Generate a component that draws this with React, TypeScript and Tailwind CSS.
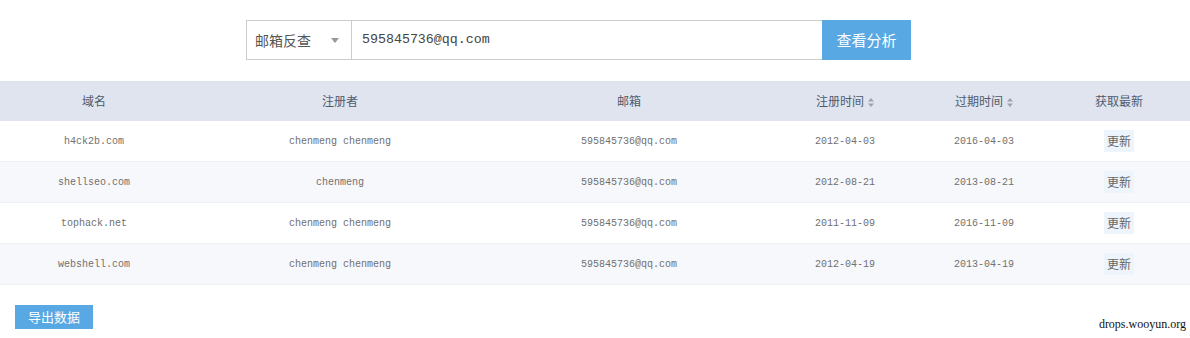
import React from 'react';

interface Row {
  domain: string;
  registrant: string;
  email: string;
  created: string;
  expires: string;
}

const rows: Row[] = [
  { domain: 'h4ck2b.com', registrant: 'chenmeng chenmeng', email: '595845736@qq.com', created: '2012-04-03', expires: '2016-04-03' },
  { domain: 'shellseo.com', registrant: 'chenmeng', email: '595845736@qq.com', created: '2012-08-21', expires: '2013-08-21' },
  { domain: 'tophack.net', registrant: 'chenmeng chenmeng', email: '595845736@qq.com', created: '2011-11-09', expires: '2016-11-09' },
  { domain: 'webshell.com', registrant: 'chenmeng chenmeng', email: '595845736@qq.com', created: '2012-04-19', expires: '2013-04-19' },
];

const cjk = "font-['Microsoft_YaHei','Noto_Sans_CJK_SC',sans-serif]";
const mono = "font-['Liberation_Mono','Noto_Sans_CJK_SC',monospace]";

const SortIcon = () => (
  <svg width="6" height="9" viewBox="0 0 6 9" className="ml-1 inline-block">
    <path d="M3 0 L6 3.5 H0 Z" fill="#9aa3b5" />
    <path d="M3 9 L6 5.5 H0 Z" fill="#9aa3b5" />
  </svg>
);

const cols = ['w-[188px]', 'w-[304px]', 'w-[274px]', 'w-[158px]', 'w-[120px]', 'flex-1'];

export default function App() {
  return (
    <div className={`w-[1190px] h-[338px] bg-white ${cjk}`}>
      {/* Search bar */}
      <div className="flex pt-5 pl-[246px]">
        <div className="flex h-10">
          <div className="w-[106px] border border-[#ccc] flex items-center justify-between pl-2 pr-3 text-[14px] text-[#555]">
            <span>邮箱反查</span>
            <svg width="8" height="5" viewBox="0 0 8 5"><path d="M0 0 H8 L4 5 Z" fill="#999" /></svg>
          </div>
          <div className={`w-[470px] border-y border-[#ccc] flex items-center pl-[10px] text-[13.3px] text-[#444] ${mono}`}>
            595845736@qq.com
          </div>
          <button className="w-[89px] bg-[#58a8e3] text-white text-[15px]">查看分析</button>
        </div>
      </div>

      {/* Table */}
      <div className="mt-[21px]">
        <div className="flex h-10 bg-[#dfe4ee] text-[12px] text-[#4f5b70] items-center">
          <div className={`${cols[0]} text-center`}>域名</div>
          <div className={`${cols[1]} text-center`}>注册者</div>
          <div className={`${cols[2]} text-center`}>邮箱</div>
          <div className={`${cols[3]} text-center`}>注册时间<SortIcon /></div>
          <div className={`${cols[4]} text-center`}>过期时间<SortIcon /></div>
          <div className={`${cols[5]} text-center pl-[4px]`}>获取最新</div>
        </div>
        {rows.map((r, i) => (
          <div
            key={r.domain}
            className={`flex h-[41px] items-center border-b border-[#edf0f5] text-[10px] text-[#707070] ${mono} ${i % 2 === 1 ? 'bg-[#f7f8fb]' : 'bg-white'}`}
          >
            <div className={`${cols[0]} text-center`}>{r.domain}</div>
            <div className={`${cols[1]} text-center`}>{r.registrant}</div>
            <div className={`${cols[2]} text-center`}>{r.email}</div>
            <div className={`${cols[3]} text-center`}>{r.created}</div>
            <div className={`${cols[4]} text-center`}>{r.expires}</div>
            <div className={`${cols[5]} flex justify-center pl-[4px]`}>
              <span className={`px-[3px] py-[2px] bg-[#eef4fb] text-[12px] text-[#666] ${cjk}`}>更新</span>
            </div>
          </div>
        ))}
      </div>

      {/* Footer */}
      <div className="flex items-end justify-between pl-[15px] pr-[4px] mt-[20px]">
        <button className="w-[78px] h-6 bg-[#58a8e3] text-white text-[13px]">导出数据</button>
        <span className="text-[12px] text-[#111] font-['Liberation_Serif',serif] mb-[-4px]">drops.wooyun.org</span>
      </div>
    </div>
  );
}
